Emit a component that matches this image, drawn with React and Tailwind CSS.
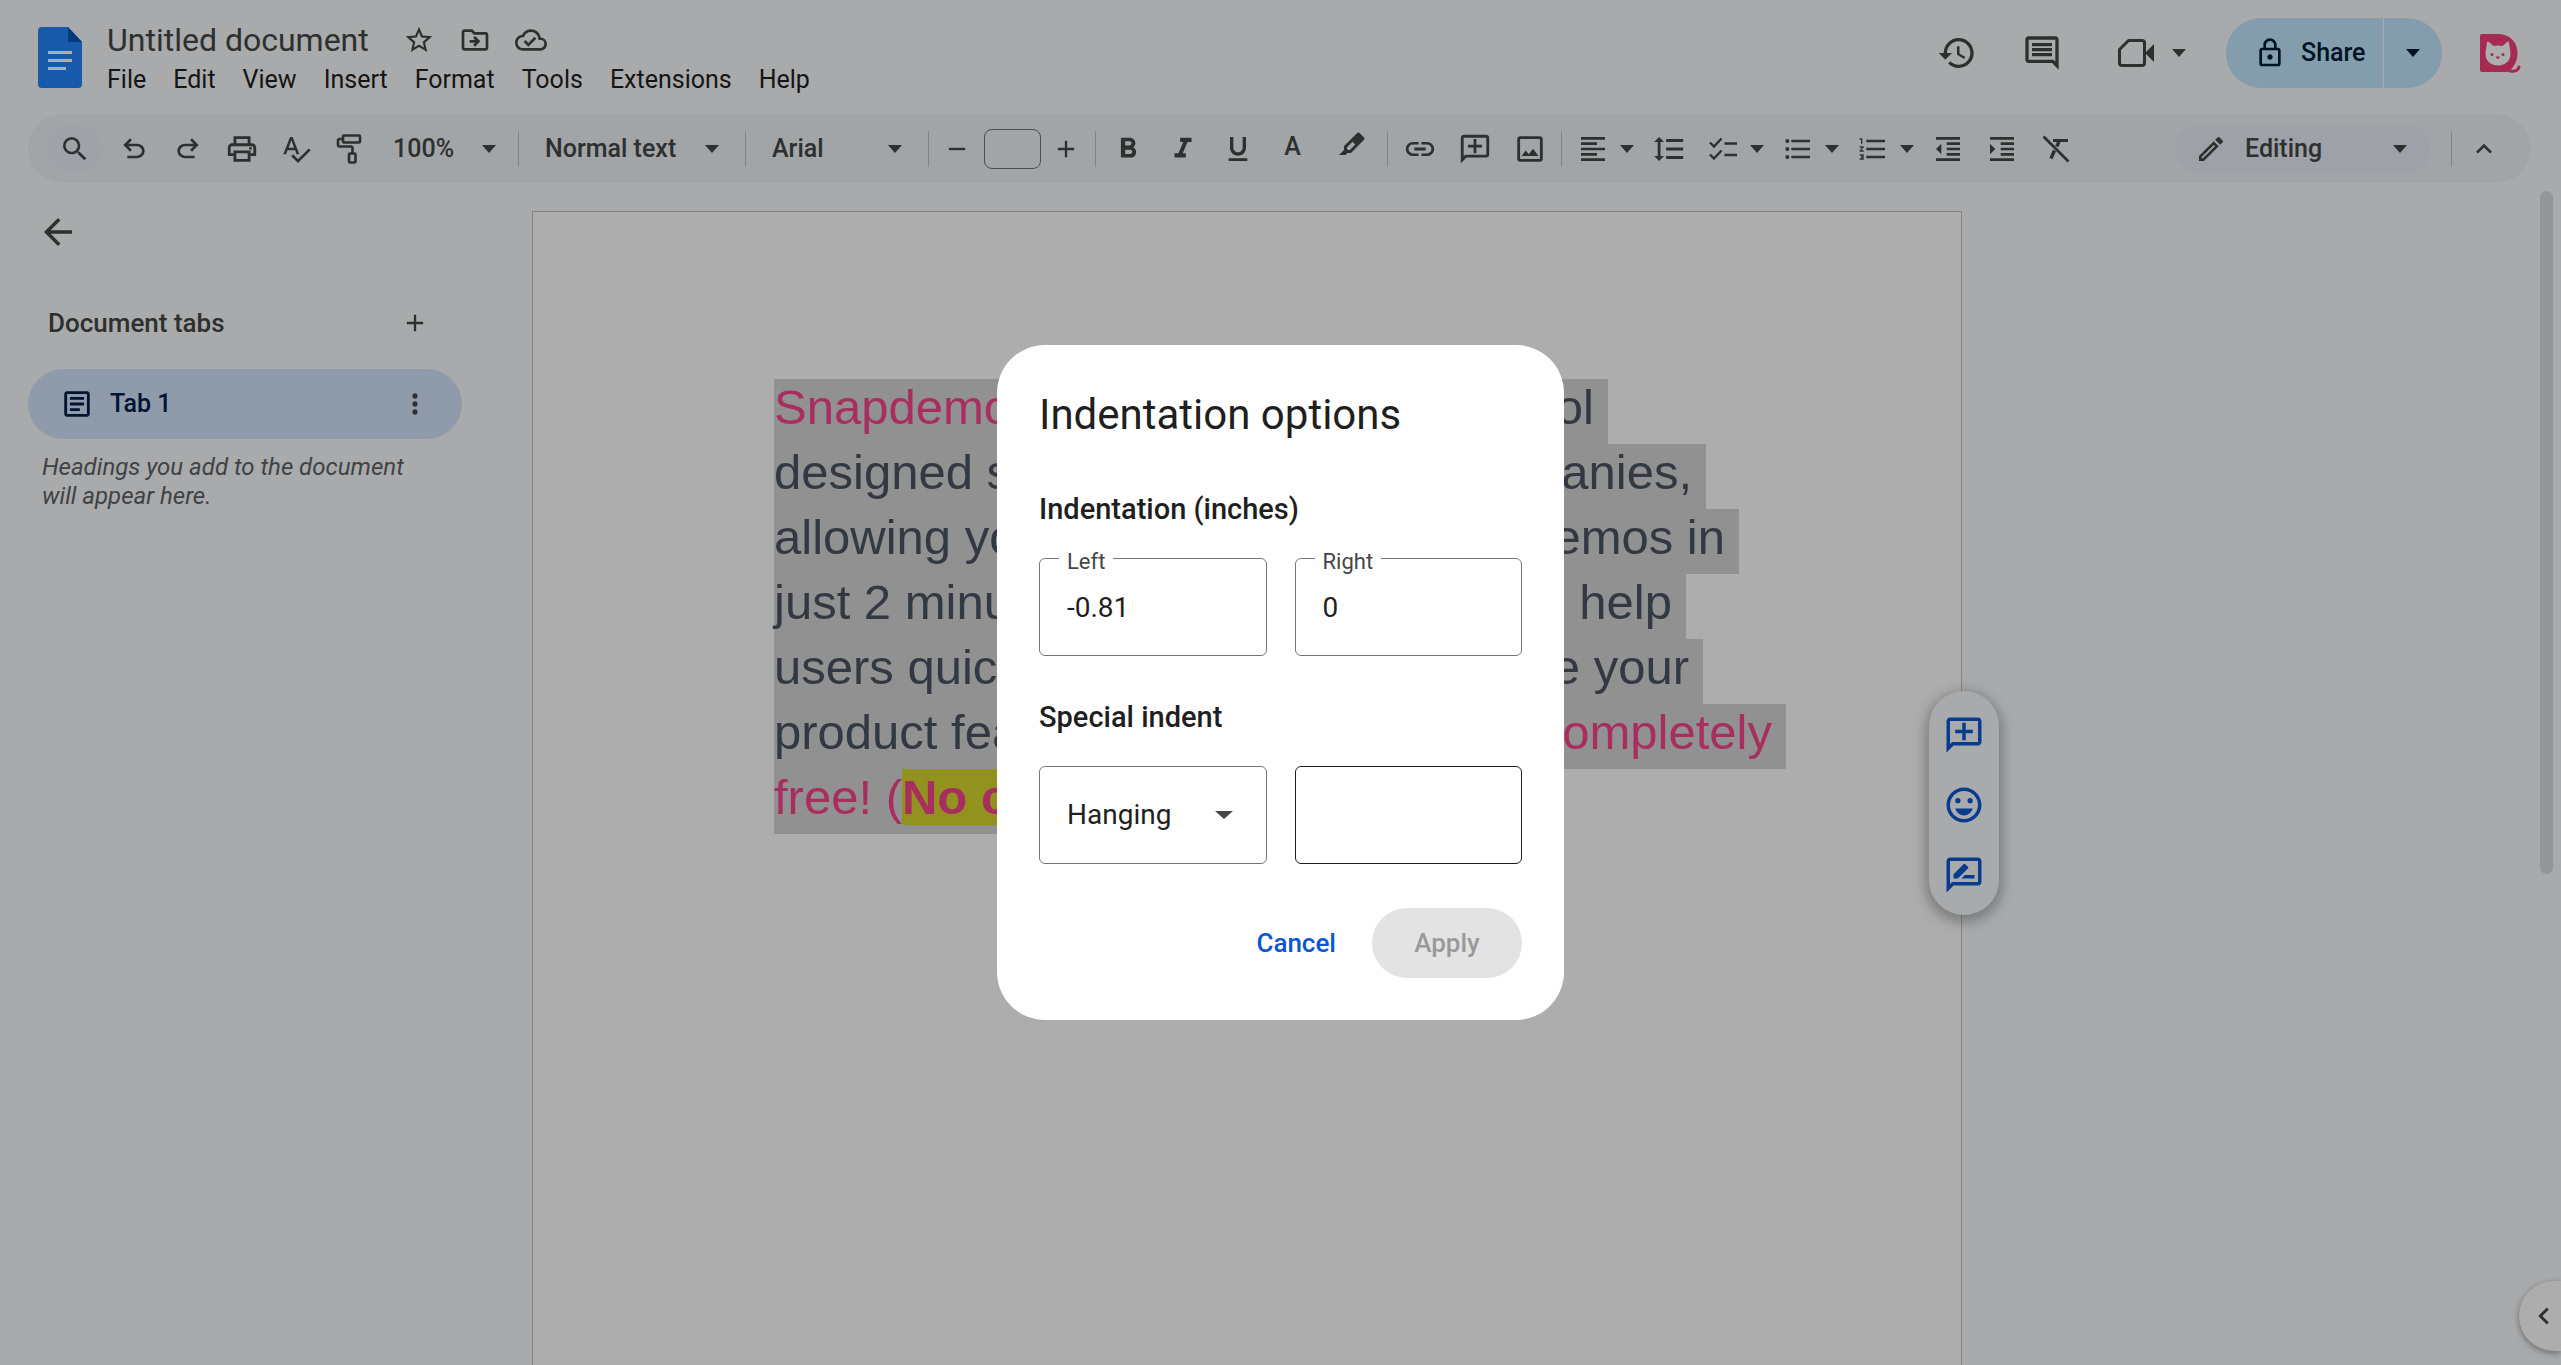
import React, { useState } from "react";
import {
  MdAdd,
  MdArrowBack,
  MdFormatAlignLeft,
  MdFormatBold,
  MdFormatIndentDecrease,
  MdFormatIndentIncrease,
  MdFormatItalic,
  MdFormatLineSpacing,
  MdFormatListBulleted,
  MdFormatListNumbered,
  MdFormatUnderlined,
  MdHistory,
  MdKeyboardArrowUp,
  MdLink,
  MdMoreVert,
  MdOutlineAddComment,
  MdOutlineArticle,
  MdOutlineCloudDone,
  MdOutlineComment,
  MdOutlineDriveFileMove,
  MdOutlineEdit,
  MdOutlineEmojiEmotions,
  MdOutlineImage,
  MdOutlineLock,
  MdOutlinePrint,
  MdOutlineRateReview,
  MdRemove,
  MdSearch,
  MdSpellcheck,
  MdStarBorder,
} from "react-icons/md";

const menus = ["File", "Edit", "View", "Insert", "Format", "Tools", "Extensions", "Help"];

// Every line of the selected paragraph, with the width of its selection
const lines = [
  { start: "Snapdemo", end: "tool", width: "w-[834px]", pink: "start" },
  { start: "designed spe", end: "companies,", width: "w-[932px]" },
  { start: "allowing you", end: "demos in", width: "w-[965px]" },
  { start: "just 2 minute", end: "to help", width: "w-[912px]" },
  { start: "users quickl", end: "create your", width: "w-[929px]" },
  { start: "product feat", end: "completely", width: "w-[1012px]", pink: "end" },
];

const Caret = ({ className = "w-3.5" }) => (
  <svg viewBox="0 0 14 8" className={`h-2 shrink-0 fill-current ${className}`} preserveAspectRatio="none">
    <path d="M0 0h14L7 8z" />
  </svg>
);

const DocsLogo = () => (
  <svg viewBox="0 0 44 61" className="h-[61px] w-11 shrink-0">
    <path d="M4 0h26l14 15v42a4 4 0 0 1-4 4H4a4 4 0 0 1-4-4V4a4 4 0 0 1 4-4z" fill="#2684fc" />
    <path d="M30 0l14 15H30z" fill="#0056b8" />
    <path d="M10 24h24v3H10zM10 32h24v3H10zM10 40h18v3H10z" fill="#fff" />
  </svg>
);

const UndoIcon = ({ className = "" }) => (
  <svg viewBox="0 -960 960 960" className={`size-8 fill-current ${className}`}>
    <path d="M280-200v-80h284q63 0 109.5-40T720-420q0-60-46.5-100T564-560H312l104 104-56 56-200-200 200-200 56 56-104 104h252q97 0 169.5 63T800-420q0 94-72.5 157T564-200H280Z" />
  </svg>
);

const PaintRollerIcon = () => (
  <svg viewBox="0 0 28 32" className="h-8 w-7 fill-none stroke-current stroke-[2.6]">
    <rect x="7" y="2.5" width="17" height="7" rx="1" />
    <path d="M7 6H3.500Q2 6 2 7.500V12q0 1.500 1.500 1.500H15q1.500 0 1.500 1.500v5" />
    <rect x="13" y="20.500" width="6.500" height="9" rx="1" />
  </svg>
);

const HighlighterIcon = () => (
  <svg viewBox="0 0 26 26" className="size-[26px] fill-current">
    <path
      fillRule="evenodd"
      d="M18 1.200q1.400-1.400 2.800 0l4 4q1.400 1.400 0 2.800L12 21H8.500L6.500 23H0l5-5v-4zM13.500 9.700L8 15.200v1.600L9.200 18h1.600l5.500-5.500z"
    />
  </svg>
);

const ChecklistIcon = () => (
  <svg viewBox="0 0 28 24" className="h-6 w-7 fill-none stroke-current stroke-[2.4]">
    <path d="M1 5.500l4 4 7.500-8M1 17.500l4 4 7.500-8M15.500 6.500H28.500M15.500 18H28.500" />
  </svg>
);

const ClearFormatIcon = () => (
  <svg viewBox="0 0 28 28" className="size-7 fill-none stroke-current stroke-[2.8]">
    <path d="M1.500 1.500l25 25M11 5.500h15" />
    <path d="M17 6.500l-2.200 5M12.500 15.500L9 23.500" className="stroke-[3.4]" />
  </svg>
);

const VideoIcon = () => (
  <svg viewBox="0 0 36 30" className="h-[30px] w-9">
    <path
      d="M10.500 2.500H24q2.500 0 2.500 2.500v20q0 2.500-2.500 2.500H4q-2.500 0-2.500-2.500V11.500z"
      className="fill-none stroke-current stroke-3"
      strokeLinejoin="round"
    />
    <path d="M27 15l9-9v18z" className="fill-current" />
  </svg>
);

const Avatar = () => (
  <svg viewBox="0 0 42 40" className="h-10 w-[42px]">
    <path d="M3 1h15c13 0 20.500 8 20.500 19 0 8-3.500 14.500-9.500 19H3a2 2 0 0 1-2-2V3a2 2 0 0 1 2-2z" fill="#f63f7b" />
    <path d="M29 37c3 2 10 2 11-3" stroke="#f63f7b" strokeWidth="3" strokeLinecap="round" fill="none" />
    <path
      d="M8 9.500q.5-1.500 2-.5l4.500 4q4.500-1.200 9 0l4.500-4q1.500-1 2 .5l1.500 10c.5 8-5 13-12.500 13S6 27.500 6.500 19.500z"
      fill="#fff"
    />
    <circle cx="13" cy="21.500" r="1.500" fill="#f63f7b" />
    <circle cx="24" cy="21.500" r="1.500" fill="#f63f7b" />
    <path d="M16.500 23.500h4.500L18.750 26.500z" fill="#f63f7b" />
  </svg>
);

const ToolButton = ({ label, className = "w-[55px]", children }) => (
  <button aria-label={label} className={`flex h-12 shrink-0 items-center justify-center ${className}`}>
    {children}
  </button>
);

const SplitButton = ({ label, children }) => (
  <div className="flex h-12 w-[75px] shrink-0 items-center">
    <button aria-label={label} className="flex w-[54px] justify-center">
      {children}
    </button>
    <button aria-label={`${label} options`}>
      <Caret />
    </button>
  </div>
);

const ToolSelect = ({ label, value, className, caret }) => (
  <div className={`grid shrink-0 items-center ${className}`}>
    <select aria-label={label} className="col-start-1 row-start-1 w-full appearance-none bg-transparent font-medium outline-none">
      <option>{value}</option>
    </select>
    <Caret className={`pointer-events-none col-start-1 row-start-1 w-3.5 justify-self-end ${caret}`} />
  </div>
);

const Divider = ({ className = "" }) => <div className={`h-9 w-px shrink-0 bg-[#c0c4c9] ${className}`} />;

const Header = () => (
  <header className="flex h-[114px] items-start justify-between pr-10 pl-[38px]">
    <div className="flex pt-[18px]">
      <div className="pt-[9px]">
        <DocsLogo />
      </div>
      <div className="pl-[25px]">
        <div className="flex h-11 items-center">
          <h1 className="text-[32px] leading-[44px] text-[#444746]">Untitled document</h1>
          <div className="flex items-center gap-6 pl-[34px] text-[32px] text-[#444746]">
            <button aria-label="Star"><MdStarBorder /></button>
            <button aria-label="Move"><MdOutlineDriveFileMove /></button>
            <button aria-label="Document status"><MdOutlineCloudDone /></button>
          </div>
        </div>
        <nav className="flex gap-[27px] text-[25px] leading-9 text-[#1f1f1f]">
          {menus.map((menu) => (
            <button key={menu}>{menu}</button>
          ))}
        </nav>
      </div>
    </div>

    <div className="mt-[18px] flex h-[70px] items-center text-[#444746]">
      <button aria-label="Version history" className="mr-[45px] text-[40px]"><MdHistory /></button>
      <button aria-label="Comments" className="mr-14 text-[40px]"><MdOutlineComment /></button>
      <button aria-label="Join a call" className="mr-[18px]"><VideoIcon /></button>
      <button aria-label="Call options" className="mr-10"><Caret /></button>
      <div className="flex h-[70px] gap-px text-[#001d35]">
        <button className="flex w-[157px] items-center rounded-l-full bg-[#c2e7ff] pl-7 text-[25px] font-medium">
          <MdOutlineLock className="mr-[15px] text-[32px]" />
          Share
        </button>
        <button aria-label="Sharing options" className="flex w-[58px] items-center rounded-r-full bg-[#c2e7ff] pl-[22px]">
          <Caret />
        </button>
      </div>
      <button aria-label="Account" className="ml-[37px]"><Avatar /></button>
    </div>
  </header>
);

const Toolbar = () => (
  <div className="mr-[30px] ml-7 flex h-[69px] items-center rounded-full bg-[#eef3f7] pl-[19px] text-[25px] text-[#444746]">
    <ToolButton label="Search" className="mr-1 w-14 rounded-full bg-[#eceff9]"><MdSearch className="text-[32px]" /></ToolButton>
    <ToolButton label="Undo" className="w-[54px]"><UndoIcon /></ToolButton>
    <ToolButton label="Redo" className="w-[54px]"><UndoIcon className="-scale-x-100" /></ToolButton>
    <ToolButton label="Print" className="w-[54px]"><MdOutlinePrint className="text-[34px]" /></ToolButton>
    <ToolButton label="Spelling" className="w-[54px]"><MdSpellcheck className="text-[32px]" /></ToolButton>
    <ToolButton label="Paint format" className="w-[54px]"><PaintRollerIcon /></ToolButton>
    <ToolSelect label="Zoom" value="100%" className="w-[141px] pl-4" caret="mr-[22px]" />
    <Divider />
    <ToolSelect label="Styles" value="Normal text" className="w-[226px] pl-[26px]" caret="mr-[26px]" />
    <Divider />
    <ToolSelect label="Font" value="Arial" className="w-[182px] pl-[26px]" caret="mr-[26px]" />
    <Divider />
    <ToolButton label="Decrease font size"><MdRemove className="text-[28px]" /></ToolButton>
    <input aria-label="Font size" className="h-10 w-[57px] shrink-0 rounded-lg border border-[#747775] bg-transparent text-center outline-none" />
    <ToolButton label="Increase font size" className="mr-1 w-[50px]"><MdAdd className="text-[28px]" /></ToolButton>
    <Divider className="mr-1" />
    <ToolButton label="Bold"><MdFormatBold className="text-[34px]" /></ToolButton>
    <ToolButton label="Italic"><MdFormatItalic className="text-[34px]" /></ToolButton>
    <ToolButton label="Underline"><MdFormatUnderlined className="text-[32px]" /></ToolButton>
    <ToolButton label="Text color"><span className="pb-1 font-medium">A</span></ToolButton>
    <ToolButton label="Highlight color" className="w-[63px]"><span className="pb-2"><HighlighterIcon /></span></ToolButton>
    <Divider className="mx-1" />
    <ToolButton label="Insert link"><MdLink className="text-[34px]" /></ToolButton>
    <ToolButton label="Add comment"><MdOutlineAddComment className="-scale-x-100 text-[34px]" /></ToolButton>
    <ToolButton label="Insert image"><MdOutlineImage className="text-[34px]" /></ToolButton>
    <Divider className="mx-1" />
    <SplitButton label="Align"><MdFormatAlignLeft className="text-[32px]" /></SplitButton>
    <ToolButton label="Line spacing"><MdFormatLineSpacing className="text-[34px]" /></ToolButton>
    <SplitButton label="Checklist"><ChecklistIcon /></SplitButton>
    <SplitButton label="Bulleted list"><MdFormatListBulleted className="text-[32px]" /></SplitButton>
    <SplitButton label="Numbered list"><MdFormatListNumbered className="text-[32px]" /></SplitButton>
    <ToolButton label="Decrease indent" className="w-[54px]"><MdFormatIndentDecrease className="text-[32px]" /></ToolButton>
    <ToolButton label="Increase indent" className="w-[54px]"><MdFormatIndentIncrease className="text-[32px]" /></ToolButton>
    <ToolButton label="Clear formatting" className="w-[54px]"><ClearFormatIcon /></ToolButton>
    <button className="ml-auto flex h-12 w-64 shrink-0 items-center rounded-full bg-[#ebeefa] pl-5 font-medium">
      <MdOutlineEdit className="mr-[18px] text-[32px]" />
      Editing
      <Caret className="mr-6 ml-auto w-3.5" />
    </button>
    <Divider className="ml-5" />
    <ToolButton label="Hide menus" className="mr-5 ml-1 w-[55px]"><MdKeyboardArrowUp className="text-[32px]" /></ToolButton>
  </div>
);

const Sidebar = () => (
  <aside className="w-[532px] shrink-0 pt-7 text-[#444746]">
    <button aria-label="Close tabs" className="ml-[37px] block text-[42px]"><MdArrowBack /></button>
    <div className="mt-[50px] flex h-10 items-center justify-between pr-[103px] pl-12">
      <h2 className="text-[26px] font-medium">Document tabs</h2>
      <button aria-label="Add tab" className="text-[28px]"><MdAdd /></button>
    </div>
    <div className="mt-[26px] ml-7 flex h-[70px] w-[434px] items-center rounded-full bg-[#d3e3fd] pl-8 text-[#041e49]">
      <MdOutlineArticle className="mr-4 text-[34px]" />
      <a href="#tab-1" className="text-[25px] font-medium">Tab 1</a>
      <button aria-label="Tab options" className="mr-[31px] ml-auto text-[32px] text-[#444746]"><MdMoreVert /></button>
    </div>
    <p className="mt-3.5 ml-[42px] w-[380px] text-[24px] leading-[29px] text-[#5f6368] italic">
      Headings you add to the document will appear here.
    </p>
  </aside>
);

const DocumentPage = () => (
  <main className="mt-7 w-full max-w-[1430px] border border-b-0 border-[#c0c2c5] bg-white pt-[167px] pl-[241px] font-['Liberation_Sans',Arial,sans-serif] text-[49px] leading-14 text-[#4b5563]">
    {lines.map((line) => (
      <div key={line.start} className={`flex justify-between bg-[#d6d6d6] pr-3.5 pb-[9px] ${line.width}`}>
        <span className={line.pink === "start" ? "text-[#f8458c]" : ""}>{line.start}</span>
        <span className={line.pink === "end" ? "text-[#f8458c]" : ""}>{line.end}</span>
      </div>
    ))}
    <div className="flex w-[600px] bg-[#d6d6d6] pb-[9px] text-[#f8458c]">
      <span>free! (</span>
      <b className="bg-[#d8d82f]">No credit card</b>
    </div>
  </main>
);

const TextField = ({ id, label, value, onChange }) => (
  <div className="relative flex-1">
    <label htmlFor={id} className="absolute -top-2 left-5 bg-white px-2 text-[22px] leading-6 text-[#444746]">
      {label}
    </label>
    <input
      id={id}
      value={value}
      onChange={(e) => onChange(e.target.value)}
      className="block h-[98px] w-full rounded-md border border-[#747775] px-[27px] text-[28px] outline-none"
    />
  </div>
);

const IndentationDialog = () => {
  const [left, setLeft] = useState("-0.81");
  const [right, setRight] = useState("0");
  const [amount, setAmount] = useState("");

  return (
    <div className="fixed inset-0 flex items-center justify-center bg-black/32">
      <div role="dialog" aria-labelledby="dialog-title" className="w-[567px] rounded-[48px] bg-white p-[42px] text-[#1f1f1f]">
        <h2 id="dialog-title" className="text-[42px] leading-[56px]">Indentation options</h2>

        <h3 className="mt-[46px] text-[29px] leading-10 font-medium">Indentation (inches)</h3>
        <div className="mt-[29px] flex gap-7">
          <TextField id="indent-left" label="Left" value={left} onChange={setLeft} />
          <TextField id="indent-right" label="Right" value={right} onChange={setRight} />
        </div>

        <h3 className="mt-[41px] text-[29px] leading-10 font-medium">Special indent</h3>
        <div className="mt-[29px] grid grid-cols-2 gap-7">
          <div className="grid items-center">
            <select
              aria-label="Special indent"
              className="col-start-1 row-start-1 h-[98px] w-full appearance-none rounded-md border border-[#747775] px-[27px] text-[28px] outline-none"
            >
              <option>Hanging</option>
              <option>First line</option>
              <option>None</option>
            </select>
            <Caret className="pointer-events-none col-start-1 row-start-1 mr-[34px] w-[18px] justify-self-end text-[#444746]" />
          </div>
          <input
            aria-label="Indent by"
            value={amount}
            onChange={(e) => setAmount(e.target.value)}
            className="h-[98px] w-full rounded-md border border-[#1f1f1f] px-[27px] text-[28px] outline-none"
          />
        </div>

        <div className="mt-11 flex justify-end gap-9 text-[26px] font-medium">
          <button className="text-[#0b57d0]">Cancel</button>
          <button disabled={!amount} className="h-[70px] w-[150px] rounded-full bg-[#e3e3e3] text-[#999999]">
            Apply
          </button>
        </div>
      </div>
    </div>
  );
};

const App = () => (
  <div className="flex h-screen flex-col overflow-hidden bg-[#f9fbfd] font-[Roboto,sans-serif]">
    <Header />
    <Toolbar />
    <div className="relative flex flex-1">
      <Sidebar />
      <DocumentPage />

      {/* Floating comment actions on the page's right edge */}
      <div className="absolute top-[508px] left-[1929px] flex h-56 w-[70px] flex-col items-center justify-center gap-7 rounded-full bg-[#f9fbfd] pt-1 text-[42px] text-[#0b57d0] shadow-[0_4px_12px_4px_rgba(60,64,67,0.35)]">
        <button aria-label="Add comment"><MdOutlineAddComment className="-scale-x-100" /></button>
        <button aria-label="Add emoji reaction"><MdOutlineEmojiEmotions /></button>
        <button aria-label="Suggest edits"><MdOutlineRateReview /></button>
      </div>

      <div className="absolute top-2 right-2 h-[683px] w-[13px] rounded-full bg-[#dadce0]" />

      <button
        aria-label="Show side panel"
        className="absolute right-0 bottom-3.5 flex h-[70px] w-[42px] items-center rounded-l-full bg-white pl-2 shadow-[0_2px_6px_rgba(60,64,67,0.5)]"
      >
        <MdKeyboardArrowUp className="-rotate-90 text-[34px] text-[#444746]" />
      </button>
    </div>
    <IndentationDialog />
  </div>
);

export default App;
